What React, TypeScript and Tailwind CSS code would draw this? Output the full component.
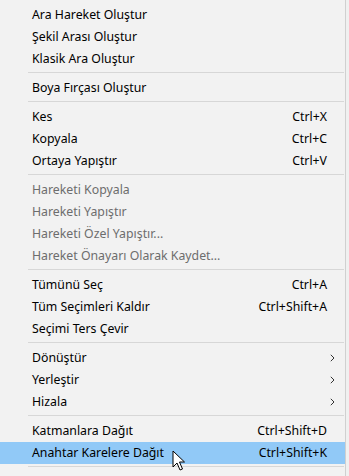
import React from "react";

type Item =
  | { type: "sep" }
  | { type: "item"; label: string; shortcut?: string; disabled?: boolean; sub?: boolean; active?: boolean };

const items: Item[] = [
  { type: "item", label: "Ara Hareket Oluştur" },
  { type: "item", label: "Şekil Arası Oluştur" },
  { type: "item", label: "Klasik Ara Oluştur" },
  { type: "sep" },
  { type: "item", label: "Boya Fırçası Oluştur" },
  { type: "sep" },
  { type: "item", label: "Kes", shortcut: "Ctrl+X" },
  { type: "item", label: "Kopyala", shortcut: "Ctrl+C" },
  { type: "item", label: "Ortaya Yapıştır", shortcut: "Ctrl+V" },
  { type: "sep" },
  { type: "item", label: "Hareketi Kopyala", disabled: true },
  { type: "item", label: "Hareketi Yapıştır", disabled: true },
  { type: "item", label: "Hareketi Özel Yapıştır...", disabled: true },
  { type: "item", label: "Hareket Önayarı Olarak Kaydet...", disabled: true },
  { type: "sep" },
  { type: "item", label: "Tümünü Seç", shortcut: "Ctrl+A" },
  { type: "item", label: "Tüm Seçimleri Kaldır", shortcut: "Ctrl+Shift+A" },
  { type: "item", label: "Seçimi Ters Çevir" },
  { type: "sep" },
  { type: "item", label: "Dönüştür", sub: true },
  { type: "item", label: "Yerleştir", sub: true },
  { type: "item", label: "Hizala", sub: true },
  { type: "sep" },
  { type: "item", label: "Katmanlara Dağıt", shortcut: "Ctrl+Shift+D" },
  { type: "item", label: "Anahtar Karelere Dağıt", shortcut: "Ctrl+Shift+K", active: true },
  { type: "sep" },
];

function Chevron() {
  return (
    <svg width="5" height="8" viewBox="0 0 5 8" className="block">
      <path d="M0.8 0.8 L4 4 L0.8 7.2" fill="none" stroke="#333" strokeWidth="1" />
    </svg>
  );
}

export default function App() {
  return (
    <div
      className="relative w-[349px] h-[476px] overflow-hidden bg-[#f2f2f2] text-[12.3px] text-black"
      style={{ fontFamily: '"Noto Sans", "Open Sans", sans-serif' }}
    >
      <div className="flex h-full">
        <div className="w-[345px] pt-[4px] flex flex-col">
          {items.map((it, i) =>
            it.type === "sep" ? (
              <div key={i} className="pt-[2px] pb-[4px] pl-[28px] pr-[1px]">
                <div className="h-px bg-[#d7d7d7]" />
              </div>
            ) : (
              <div
                key={i}
                className={`h-[22px] flex items-center pl-[32px] pr-[18px] leading-none ${
                  it.active ? "bg-[#91c9f7]" : ""
                } ${it.disabled ? "text-[#6d6d6d]" : "text-black"}`}
              >
                <span className="flex-1 whitespace-nowrap">{it.label}</span>
                {it.shortcut && <span className="whitespace-nowrap">{it.shortcut}</span>}
                {it.sub && (
                  <span className="mr-[-8px]">
                    <Chevron />
                  </span>
                )}
              </div>
            )
          )}
        </div>
        <div className="w-px bg-[#d0d0d0]" />
        <div className="flex-1 bg-[#f0f0f0]" />
      </div>
      <svg
        className="absolute left-[172px] top-[450px]"
        width="14"
        height="22"
        viewBox="0 0 14 22"
      >
        <path
          d="M1 1 L1 17 L5 13 L8 20 L10.5 19 L7.5 12 L12.5 12 Z"
          fill="#fff"
          stroke="#000"
          strokeWidth="1"
          strokeLinejoin="miter"
        />
      </svg>
    </div>
  );
}
